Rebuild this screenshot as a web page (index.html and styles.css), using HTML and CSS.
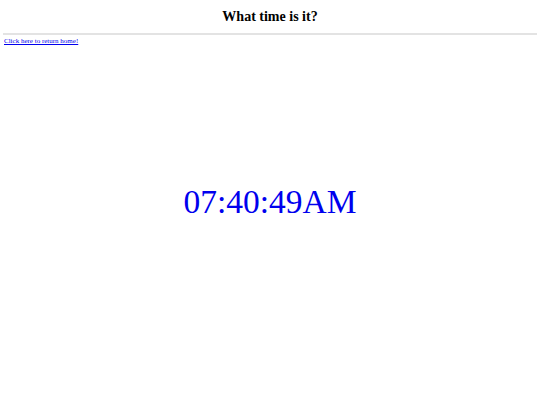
FILE: index.html
```html
<!DOCTYPE html>
<html>
<head>
<meta charset="utf-8">
<title>What time is it?</title>
<link rel="stylesheet" href="styles.css">
</head>
<body>
<h1 class="title">What time is it?</h1>
<hr class="rule">
<p class="nav"><a class="home" href="#">Click here to return home!</a></p>
<div class="clock">07:40:49AM</div>
</body>
</html>
```
FILE: styles.css
```css
html, body {
  background: #ffffff;
}
body {
  margin: 0 3px;
  font-family: "Liberation Serif", "Times New Roman", serif;
  color: #000;
}
.title {
  margin: 0;
  padding-top: 9px;
  font-size: 14px;
  line-height: 16px;
  font-weight: bold;
  text-align: center;
}
.rule {
  margin: 8px 0 0 0;
  border: 0;
  height: 2px;
  background: #e3e3e3;
}
.nav {
  margin: 2px 0 0 1px;
  font-size: 7px;
  line-height: 9px;
}
.home {
  color: #0000ee;
  text-decoration: underline;
}
.clock {
  margin-top: 137px;
  font-size: 33.5px;
  line-height: 38px;
  text-align: center;
  color: #0000ee;
}
```
